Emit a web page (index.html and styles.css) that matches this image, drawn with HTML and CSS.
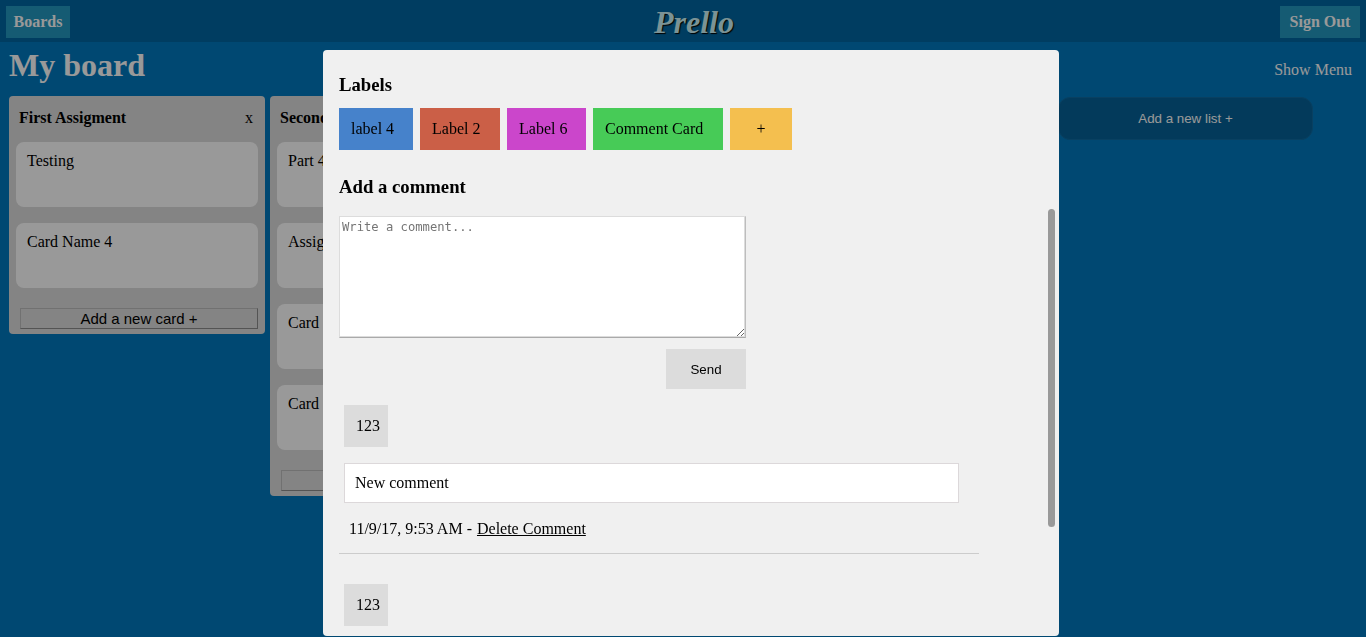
FILE: index.html
```html
<!DOCTYPE html>
<html lang="en">
<head>
<meta charset="utf-8">
<title>Prello</title>
<link rel="stylesheet" href="styles.css">
</head>
<body>
<div class="page">
  <header class="topbar">
    <a class="nav-button boards">Boards</a>
    <div class="logo">Prello</div>
    <a class="nav-button signout">Sign Out</a>
  </header>
  <div class="board-head">
    <h1>My board</h1>
    <a class="show-menu">Show Menu</a>
  </div>
  <main class="lists">
    <section class="list">
      <div class="list-head"><h4>First Assigment</h4><span>x</span></div>
      <div class="card">Testing</div>
      <div class="card">Card Name 4</div>
      <button class="add-card">Add a new card +</button>
    </section>
    <section class="list">
      <div class="list-head"><h4>Second</h4></div>
      <div class="card">Part 4</div>
      <div class="card">Assig</div>
      <div class="card">Card</div>
      <div class="card">Card</div>
      <button class="add-card"></button>
    </section>
    <button class="add-list">Add a new list +</button>
  </main>
</div>
<div class="overlay">
  <div class="modal">
    <h3>Labels</h3>
    <div class="labels">
      <span class="label blue">label 4</span>
      <span class="label red">Label 2</span>
      <span class="label purple">Label 6</span>
      <span class="label green">Comment Card</span>
      <span class="label yellow">+</span>
    </div>
    <h3 class="comment-title">Add a comment</h3>
    <form class="comment-form">
      <textarea placeholder="Write a comment..."></textarea>
      <button type="button" class="send">Send</button>
    </form>
    <article class="comment">
      <div class="author">123</div>
      <div class="comment-text">New comment</div>
      <div class="meta">11/9/17, 9:53 AM - <a>Delete Comment</a></div>
    </article>
    <article class="comment">
      <div class="author">123</div>
    </article>
    <div class="scroll-thumb"></div>
  </div>
</div>
</body>
</html>
```
FILE: styles.css
```css
* { box-sizing: border-box; }
body {
  margin: 0;
  height: 637px;
  overflow: hidden;
  background: #0079bf;
  font: 16px/18px "Liberation Serif", serif;
  color: #000;
}
h1, h3, h4 { margin: 0; }
.topbar {
  display: grid;
  grid-template-columns: 1fr auto 1fr;
  align-items: start;
  height: 42px;
  padding: 6px 6px 0;
  background: #0067a2;
}
.nav-button {
  height: 32px;
  line-height: 32px;
  text-align: center;
  font-weight: bold;
  color: #fff;
  background: #2398c0;
}
.boards { width: 64px; }
.signout { width: 80px; justify-self: end; }
.logo {
  margin-top: -2px;
  padding-left: 22px;
  font: italic bold 32px/36px "Liberation Serif", serif;
  color: #cdf6fa;
  text-shadow: 1px 1px 1px #000;
}
.board-head {
  display: flex;
  justify-content: space-between;
  height: 54px;
  padding: 5px 14px 0 9px;
  color: #fff;
}
.board-head h1 { font-size: 32px; line-height: 36px; }
.show-menu { margin-top: 14px; }
.lists {
  display: flex;
  align-items: flex-start;
  gap: 5px;
  padding-left: 9px;
}
.list {
  flex: none;
  width: 256px;
  padding: 0 7px 5px;
  border-radius: 4px;
  background: #dcdcdc;
}
.list-head {
  display: flex;
  justify-content: space-between;
  height: 46px;
  padding: 13px 5px 0 3px;
}
.list-head h4 { font-size: 16px; }
.card {
  height: 65px;
  margin-bottom: 16px;
  padding: 10px 11px;
  border-radius: 8px;
  background: #fff;
}
.add-card {
  display: block;
  width: 238px;
  height: 21px;
  margin: 20px 0 0 4px;
  padding: 0;
  border: 1px solid;
  border-color: #bcbcbc #8c8c8c #8c8c8c #bcbcbc;
  background: transparent;
  font: 15px/19px "Liberation Sans", sans-serif;
  color: #000;
}
.add-list {
  width: 255px;
  height: 43px;
  margin: 1px 53px 0 auto;
  border: 1px solid #0f6ba2;
  border-radius: 12px;
  background: #056298;
  font: 13.33px "Liberation Sans", sans-serif;
  color: #fff;
}
.overlay {
  position: fixed;
  inset: 0;
  padding: 50px 0 0 323px;
  background: rgba(0, 0, 0, .4);
}
.modal {
  position: relative;
  width: 736px;
  height: 586px;
  padding: 24px 16px 0;
  overflow: hidden;
  border-radius: 4px;
  background: #f0f0f0;
}
.modal h3 { font-size: 18.72px; line-height: 21px; }
.labels { display: flex; gap: 7px; margin-top: 13px; }
.label {
  height: 42px;
  padding-left: 12px;
  line-height: 42px;
}
.blue { width: 74px; background: #4682cb; }
.red { width: 80px; background: #cb5f47; }
.purple { width: 79px; background: #cb46cb; }
.green { width: 130px; background: #47cb57; }
.yellow { width: 62px; padding: 0; text-align: center; background: #f4bf4f; }
.modal .comment-title { margin-top: 26px; }
.comment-form {
  display: flex;
  flex-direction: column;
  align-items: flex-end;
  width: 407px;
  margin-top: 19px;
}
textarea {
  width: 407px;
  height: 122px;
  padding: 2px;
  border: 1px solid #dcdcdc;
  border-right-color: #bdbdbd;
  border-bottom: 1px solid #aaa;
  box-shadow: inset -1px -1px #dcdcdc;
  background: #fff;
  font: 12.18px/16px "DejaVu Sans Mono", monospace;
}
textarea::placeholder { color: #757575; }
.send {
  width: 80px;
  height: 40px;
  margin-top: 11px;
  border: 0;
  background: #dcdcdc;
  font: 13.33px "Liberation Sans", sans-serif;
  color: #000;
}
.comment {
  width: 640px;
  height: 149px;
  margin-top: 16px;
  padding-left: 5px;
  border-bottom: 1px solid #ccc;
}
.comment + .comment { margin-top: 30px; }
.author {
  width: 44px;
  height: 42px;
  padding-left: 12px;
  line-height: 42px;
  background: #dcdcdc;
}
.comment-text {
  width: 615px;
  height: 40px;
  margin-top: 16px;
  padding-left: 10px;
  border: 1px solid #dcd8da;
  line-height: 38px;
  background: #fff;
}
.meta { margin: 17px 0 0 5px; }
.meta a { margin-left: 1px; text-decoration: underline; }
.scroll-thumb {
  position: absolute;
  top: 159px;
  right: 4px;
  width: 7px;
  height: 318px;
  border-radius: 4px;
  background: #999;
}
```
